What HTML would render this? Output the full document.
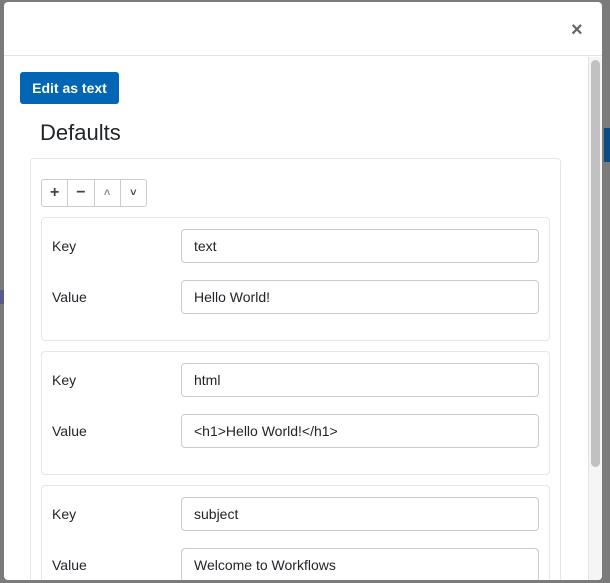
<!DOCTYPE html>
<html><head><style>
*{box-sizing:border-box}
body{margin:0;width:610px;height:583px;background:#7b7b7b;font-family:"Liberation Sans",sans-serif;overflow:hidden;position:relative;color:#212529}
.modal{position:absolute;left:4px;top:2px;width:598px;height:578px;background:#fff;border-radius:4px;overflow:hidden}
.hdr{position:absolute;left:0;top:0;width:598px;height:54px;border-bottom:1px solid #e3e3e3}
.x{position:absolute;left:567px;top:17px;font-size:20px;font-weight:bold;color:#666}
.btn{position:absolute;left:16px;top:70px;width:99px;height:32px;background:#0366b4;color:#fff;border-radius:3px;font-size:14px;font-weight:bold;line-height:32px;text-align:center}
h1{position:absolute;left:36px;top:118px;margin:0;font-size:22px;font-weight:normal}
.panel{position:absolute;left:26px;top:156px;width:531px;height:440px;border:1px solid #e6e6e6;border-radius:4px}
.grp{position:absolute;left:37px;top:179px;width:106px;height:28px;border:1px solid #ccc;border-radius:3px;display:flex}
.grp div{flex:1;border-right:1px solid #ccc;text-align:center;line-height:26px;font-size:16px;font-weight:bold;color:#444}
.grp div:last-child{border-right:0}
.card{position:absolute;left:37px;width:509px;height:124px;border:1px solid #e6e6e6;border-radius:4px}
.lab{position:absolute;left:10px;font-size:14px}
.inp{position:absolute;left:139px;width:358px;height:34px;border:1px solid #c8ccd0;border-radius:4px;font-size:14px;line-height:32px;padding-left:12px}
.track{position:absolute;left:584px;top:55px;width:14px;height:530px;background:#f5f5f5;border-left:1px solid #e3e3e3}
.thumb{position:absolute;left:587px;top:58px;width:9px;height:407px;background:#c1c1c1;border-radius:5px}
</style></head><body>
<div style="position:absolute;left:604px;top:128px;width:6px;height:34px;background:#0a4c85"></div>
<div style="position:absolute;left:0;top:290px;width:4px;height:14px;background:#5a5a8a"></div>
<div class="modal">
<div class="hdr"><span class="x">×</span></div>
<div class="btn">Edit as text</div>
<h1>Defaults</h1>
<div class="panel"></div>
<div class="grp" style="top:177px"><div>+</div><div>−</div><div style="font-size:11px;color:#888">˄</div><div style="font-size:11px">˅</div></div>
<div class="card" style="top:215px">
<span class="lab" style="top:20px">Key</span><div class="inp" style="top:11px">text</div>
<span class="lab" style="top:71px">Value</span><div class="inp" style="top:62px">Hello World!</div></div>
<div class="card" style="top:349px">
<span class="lab" style="top:20px">Key</span><div class="inp" style="top:11px">html</div>
<span class="lab" style="top:71px">Value</span><div class="inp" style="top:62px">&lt;h1&gt;Hello World!&lt;/h1&gt;</div></div>
<div class="card" style="top:483px">
<span class="lab" style="top:20px">Key</span><div class="inp" style="top:11px">subject</div>
<span class="lab" style="top:71px">Value</span><div class="inp" style="top:62px">Welcome to Workflows</div></div>
<div class="track"></div><div class="thumb"></div>
</div>
</body></html>
